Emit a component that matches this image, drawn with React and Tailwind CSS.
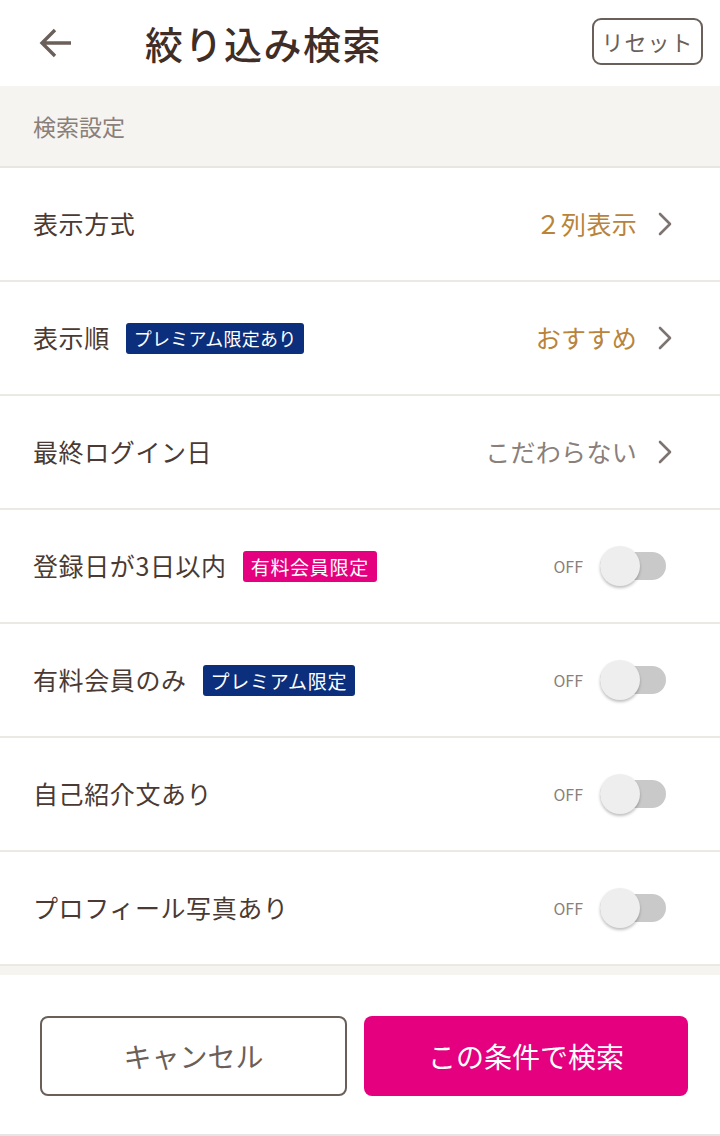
import React from 'react';

const font = { fontFamily: '"Noto Sans CJK JP", "Noto Sans", sans-serif' };

const Chevron = () => (
  <svg width="16" height="26" viewBox="0 0 16 26" className="ml-[20px]">
    <path d="M3 3 L13 13 L3 23" fill="none" stroke="#7d7370" strokeWidth="2.6" strokeLinecap="round" strokeLinejoin="round" />
  </svg>
);

const Badge = ({ children, tone, tight }) => (
  <span
    className={`ml-[16px] inline-flex items-center h-[31px] px-[8px] rounded-[3px] leading-none text-white ${
      tight ? 'text-[18px] tracking-[0.2px]' : 'text-[19px] tracking-[0.7px]'
    } ${tone === 'pink' ? 'bg-[#e4007f]' : 'bg-[#0b2f7c]'}`}
  >
    {children}
  </span>
);

const Toggle = () => (
  <div className="flex items-center mr-[7px]">
    <span className="text-[16px] text-[#8a7f7a] mr-[17px]">OFF</span>
    <div className="relative w-[66px] h-[40px] flex items-center">
      <div className="w-[66px] h-[28px] rounded-full bg-[#c9c9c9]" />
      <div className="absolute left-0 top-0 w-[40px] h-[40px] rounded-full bg-[#eeeeee] shadow-[0_2px_3px_rgba(0,0,0,0.25)]" />
    </div>
  </div>
);

const rows = [
  { label: '表示方式', value: '２列表示', gold: true },
  { label: '表示順', badge: 'プレミアム限定あり', tight: true, value: 'おすすめ', gold: true },
  { label: '最終ログイン日', value: 'こだわらない' },
  { label: '登録日が3日以内', badge: '有料会員限定', tone: 'pink', toggle: true },
  { label: '有料会員のみ', badge: 'プレミアム限定', toggle: true },
  { label: '自己紹介文あり', toggle: true },
  { label: 'プロフィール写真あり', toggle: true },
];

export default function App() {
  return (
    <div style={font} className="w-[720px] h-[1136px] bg-white flex flex-col text-[#4a3a33]">
      {/* header */}
      <div className="h-[86px] flex items-center pl-[38px] pr-[17px]">
        <svg width="36" height="36" viewBox="0 0 36 36">
          <path d="M33 18 H5 M17 5 L4 18 L17 31" fill="none" stroke="#6b5f5a" strokeWidth="3.4" strokeLinejoin="miter" />
        </svg>
        <h1 className="ml-[71px] text-[38px] font-medium text-[#3f2e28] tracking-[1.5px] -mt-[2px]">絞り込み検索</h1>
        <button className="ml-auto w-[111px] h-[47px] -mt-[3px] border-2 border-[#6b5f5a] rounded-[9px] text-[22px] text-[#6b5f5a] tracking-[1px]">
          リセット
        </button>
      </div>

      {/* section */}
      <div className="h-[82px] bg-[#f5f4f0] border-b-2 border-[#e8e6e0] flex items-center pl-[33px]">
        <span className="text-[23px] text-[#8a7f7a]">検索設定</span>
      </div>

      {rows.map((row) => (
        <div key={row.label} className="h-[114px] shrink-0 border-b-2 border-[#ebe9e4] flex items-center pl-[33px] pr-[47px]">
          <span className="text-[25px] tracking-[0.6px] text-[#4a3a33]">{row.label}</span>
          {row.badge && (
            <Badge tone={row.tone} tight={row.tight}>
              {row.badge}
            </Badge>
          )}
          <div className="ml-auto flex items-center">
            {row.toggle ? (
              <Toggle />
            ) : (
              <>
                <span className={`text-[25px] tracking-[0.3px] ${row.gold ? 'text-[#b8843c]' : 'text-[#8a7f7a]'}`}>
                  {row.value}
                </span>
                <Chevron />
              </>
            )}
          </div>
        </div>
      ))}

      <div className="h-[9px] bg-[#f5f4f0]" />

      {/* footer */}
      <div className="flex-1 flex items-start gap-[17px] pl-[40px] pr-[32px] pt-[41px] border-b-2 border-[#e5e5e5]">
        <button className="w-[307px] h-[80px] shrink-0 border-2 border-[#6b5f5a] rounded-[8px] text-[28px] text-[#6b5f5a]">
          キャンセル
        </button>
        <button className="w-[324px] h-[80px] shrink-0 bg-[#e4007f] rounded-[8px] text-[28px] text-white">
          この条件で検索
        </button>
      </div>
    </div>
  );
}
